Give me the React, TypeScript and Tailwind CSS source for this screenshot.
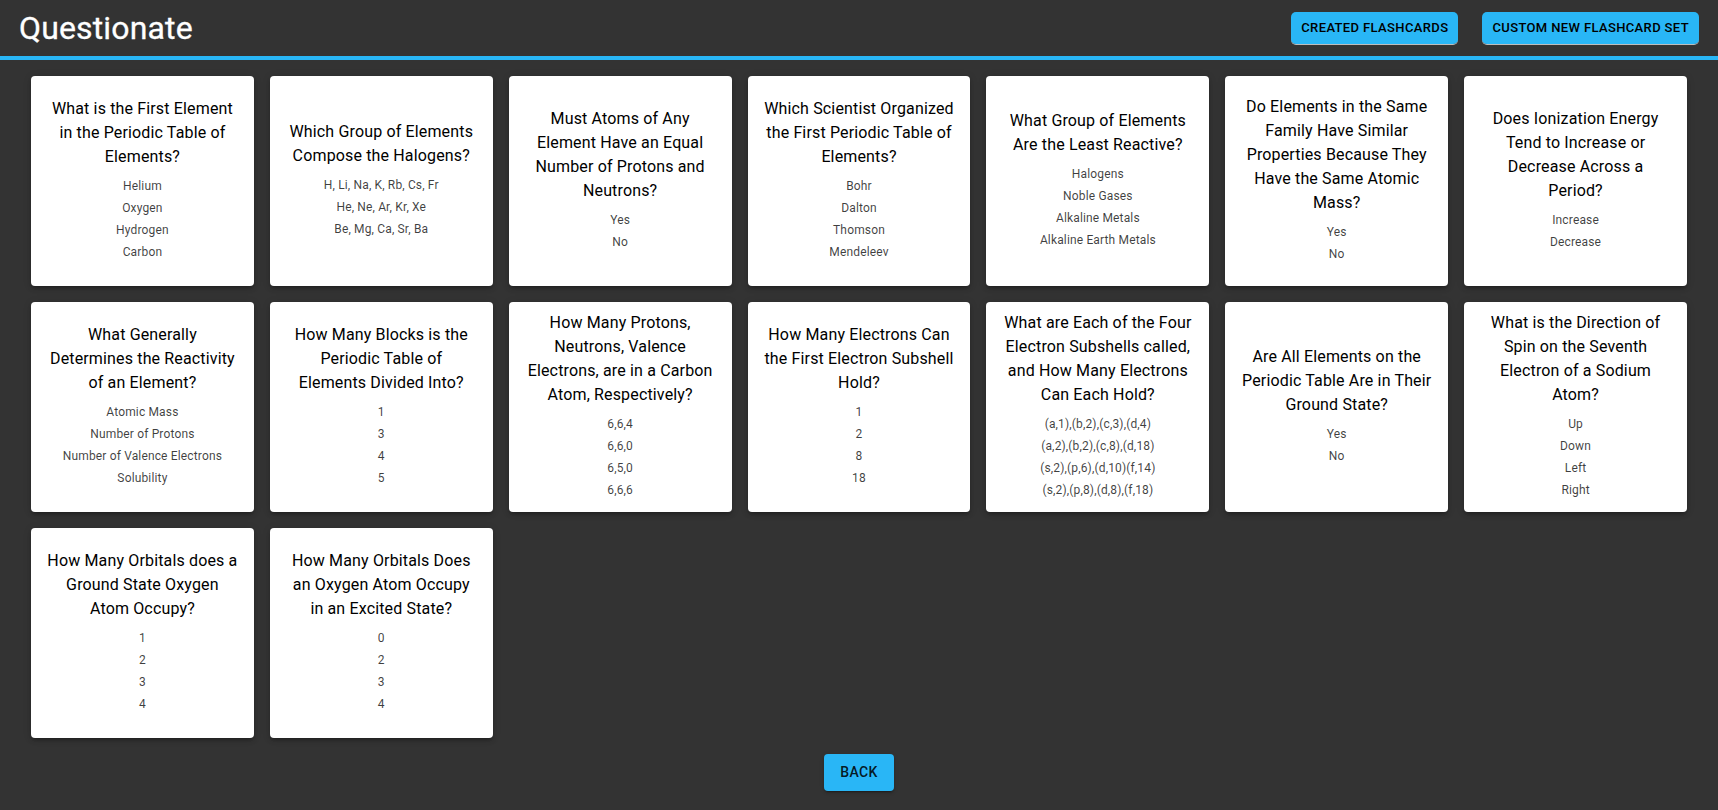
const cards: { q: string; a: string[] }[] = [
  { q: "What is the First Element in the Periodic Table of Elements?", a: ["Helium", "Oxygen", "Hydrogen", "Carbon"] },
  { q: "Which Group of Elements Compose the Halogens?", a: ["H, Li, Na, K, Rb, Cs, Fr", "He, Ne, Ar, Kr, Xe", "Be, Mg, Ca, Sr, Ba"] },
  { q: "Must Atoms of Any Element Have an Equal Number of Protons and Neutrons?", a: ["Yes", "No"] },
  { q: "Which Scientist Organized the First Periodic Table of Elements?", a: ["Bohr", "Dalton", "Thomson", "Mendeleev"] },
  { q: "What Group of Elements Are the Least Reactive?", a: ["Halogens", "Noble Gases", "Alkaline Metals", "Alkaline Earth Metals"] },
  { q: "Do Elements in the Same Family Have Similar Properties Because They Have the Same Atomic Mass?", a: ["Yes", "No"] },
  { q: "Does Ionization Energy Tend to Increase or Decrease Across a Period?", a: ["Increase", "Decrease"] },
  { q: "What Generally Determines the Reactivity of an Element?", a: ["Atomic Mass", "Number of Protons", "Number of Valence Electrons", "Solubility"] },
  { q: "How Many Blocks is the Periodic Table of Elements Divided Into?", a: ["1", "3", "4", "5"] },
  { q: "How Many Protons, Neutrons, Valence Electrons, are in a Carbon Atom, Respectively?", a: ["6,6,4", "6,6,0", "6,5,0", "6,6,6"] },
  { q: "How Many Electrons Can the First Electron Subshell Hold?", a: ["1", "2", "8", "18"] },
  { q: "What are Each of the Four Electron Subshells called, and How Many Electrons Can Each Hold?", a: ["(a,1),(b,2),(c,3),(d,4)", "(a,2),(b,2),(c,8),(d,18)", "(s,2),(p,6),(d,10)(f,14)", "(s,2),(p,8),(d,8),(f,18)"] },
  { q: "Are All Elements on the Periodic Table Are in Their Ground State?", a: ["Yes", "No"] },
  { q: "What is the Direction of Spin on the Seventh Electron of a Sodium Atom?", a: ["Up", "Down", "Left", "Right"] },
  { q: "How Many Orbitals does a Ground State Oxygen Atom Occupy?", a: ["1", "2", "3", "4"] },
  { q: "How Many Orbitals Does an Oxygen Atom Occupy in an Excited State?", a: ["0", "2", "3", "4"] },
];

const raised = "shadow-[0_3px_1px_-2px_rgba(0,0,0,0.2),0_2px_2px_0_rgba(0,0,0,0.14),0_1px_5px_0_rgba(0,0,0,0.12)]";
const navButton = "h-[33px] rounded-[5px] border-b border-[#bdbdbd] bg-[#29b6f6] bg-clip-padding px-[10px] pb-px text-[13px] font-medium tracking-[0.37px] text-black";

export default function App() {
  return (
    <div className="min-h-[810px] bg-[#333333] font-['Roboto',sans-serif]">
      <header className="flex h-[60px] items-start justify-between border-b-4 border-[#29b6f6] pl-[19px] pr-[19px]">
        <h1 className="pt-2 text-[32px] leading-10 tracking-[0.15px] text-white [-webkit-text-stroke:0.3px_white]">Questionate</h1>
        <div className="flex gap-6 pt-3">
          <button className={navButton}>CREATED FLASHCARDS</button>
          <button className={navButton}>CUSTOM NEW FLASHCARD SET</button>
        </div>
      </header>
      <main className="px-[31px] pt-4">
        <div className="grid grid-cols-7 gap-4">
          {cards.map((card) => (
            <section key={card.q} className="flex h-[210px] flex-col items-center justify-center rounded bg-white px-4 pb-0.5 text-center shadow-[0_3px_3px_-2px_rgba(0,0,0,0.2),0_3px_4px_0_rgba(0,0,0,0.14),0_1px_8px_0_rgba(0,0,0,0.12)]">
              <h2 className="mb-1.5 text-base leading-6 tracking-[0.15px] text-black">{card.q}</h2>
              {card.a.map((answer) => (
                <p key={answer} className="text-xs leading-[22px] tracking-[0.15px] text-black/75">{answer}</p>
              ))}
            </section>
          ))}
        </div>
        <div className="flex justify-center pt-4">
          <button className={`h-[37px] rounded bg-[#29b6f6] px-4 pb-0.5 text-sm font-medium tracking-[0.4px] text-black/87 ${raised}`}>BACK</button>
        </div>
      </main>
    </div>
  );
}
